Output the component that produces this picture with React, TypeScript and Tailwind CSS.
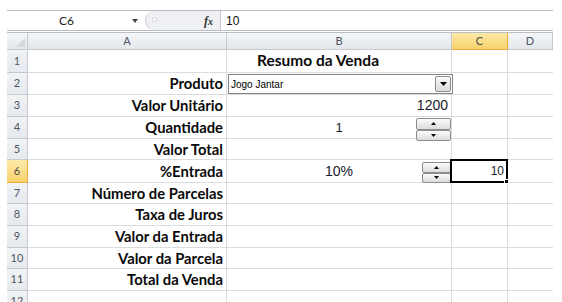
import React from "react";

const rowHeights = [23, 22, 22, 22, 21, 23, 21, 22, 22, 21, 22, 21];
const labels: Record<number, string> = {
  2: "Produto",
  3: "Valor Unitário",
  4: "Quantidade",
  5: "Valor Total",
  6: "%Entrada",
  7: "Número de Parcelas",
  8: "Taxa de Juros",
  9: "Valor da Entrada",
  10: "Valor da Parcela",
  11: "Total da Venda",
};

const calibri = { fontFamily: "Lato, 'Open Sans', sans-serif" };
const arial = { fontFamily: "'Liberation Sans', Arial, sans-serif" };

function Spinner({ className }: { className: string }) {
  return (
    <div className={`absolute flex flex-col ${className}`}>
      <div className="flex-1 flex items-center justify-center rounded-[2px] border border-[#8a8c8f] bg-gradient-to-b from-[#fbfbfb] to-[#dcdcdc]">
        <svg width="5" height="3" viewBox="0 0 5 3">
          <polygon points="2.5,0 5,3 0,3" fill="#000" />
        </svg>
      </div>
      <div className="flex-1 flex items-center justify-center rounded-[2px] border border-[#8a8c8f] bg-gradient-to-b from-[#fbfbfb] to-[#dcdcdc]">
        <svg width="5" height="3" viewBox="0 0 5 3">
          <polygon points="0,0 5,0 2.5,3" fill="#000" />
        </svg>
      </div>
    </div>
  );
}

export default function App() {
  const cols = ["A", "B", "C", "D"];
  const colW = ["w-[199px]", "w-[225px]", "w-[56px]", "w-[45px]"];
  return (
    <div className="w-[562px] h-[302px] overflow-hidden bg-white">
      <div className="pt-[10px] pl-[7px] w-[553px]">
        {/* formula bar */}
        <div className="flex h-[21px] border-t border-b border-[#b9bec5] bg-white" style={calibri}>
          <div className="w-[119px] flex items-center justify-center text-[12px] text-[#222]">C6</div>
          <div className="w-[17px] flex items-center justify-center">
            <svg width="6" height="4" viewBox="0 0 6 4">
              <polygon points="0,0 6,0 3,4" fill="#444" />
            </svg>
          </div>
          <div className="flex-1 flex items-stretch pl-[2px]">
            <div className="w-[75px] flex items-center bg-[#eef0f3] rounded-l-[10px] border-l border-[#c8ccd2] relative">
              <div className="absolute left-[6px] top-[6px] w-[5px] h-[5px] rounded-full border border-[#d0d4d9] bg-white" />
              <span
                className="ml-auto mr-[7px] text-[12px] italic font-bold text-[#333]"
                style={{ fontFamily: "'Liberation Serif', serif" }}
              >
                f<span className="text-[10px]">x</span>
              </span>
            </div>
            <div className="w-px bg-[#c8ccd2]" />
            <div className="flex-1 flex items-center pl-[5px] text-[12px] text-[#111]" style={arial}>
              10
            </div>
          </div>
        </div>
        <div className="h-[2px] border-b border-[#b9bec5]" />

        {/* header row */}
        <div className="flex h-[17px]" style={calibri}>
          <div className="w-[21px] relative bg-gradient-to-b from-[#f5f6f8] to-[#e3e7ec] border-r border-b border-[#c5cad1]">
            <svg className="absolute right-[2px] bottom-[2px]" width="9" height="9" viewBox="0 0 9 9">
              <polygon points="9,0 9,9 0,9" fill="#d4d8dd" />
            </svg>
          </div>
          {cols.map((c, i) => (
            <div
              key={c}
              className={`${colW[i]} flex items-center justify-center text-[11px] border-r border-b ${
                c === "C"
                  ? "bg-gradient-to-b from-[#fdeaa8] to-[#f8d26a] border-[#f0a83c] text-[#4b4b4b]"
                  : "bg-gradient-to-b from-[#f5f6f8] to-[#e3e7ec] border-[#c5cad1] text-[#4c5665]"
              }`}
            >
              {c}
            </div>
          ))}
        </div>

        {/* rows */}
        {rowHeights.map((h, idx) => {
          const r = idx + 1;
          const sel = r === 6;
          return (
            <div key={r} className="flex" style={{ height: h }}>
              <div
                className={`w-[21px] flex items-center justify-center text-[11px] border-r border-b ${
                  sel
                    ? "bg-gradient-to-b from-[#fdeaa8] to-[#f8d26a] border-[#f0a83c] text-[#4b4b4b]"
                    : "bg-gradient-to-b from-[#f1f3f5] to-[#e6e9ed] border-[#c5cad1] text-[#4c5665]"
                }`}
                style={calibri}
              >
                {r}
              </div>
              {/* A */}
              <div
                className="w-[199px] border-r border-b border-[#dadcdd] flex items-center justify-end pr-[3px] text-[14.8px] font-bold text-[#0a0a0a]"
                style={calibri}
              >
                {labels[r] ?? ""}
              </div>
              {/* B */}
              <div className="w-[225px] border-r border-b border-[#dadcdd] relative flex items-center" style={arial}>
                {r === 1 && (
                  <span className="pl-[30px] text-[15.5px] font-bold text-[#0a0a0a]" style={calibri}>
                    Resumo da Venda
                  </span>
                )}
                {r === 2 && (
                  <div className="absolute left-[1px] top-[1px] w-[225px] h-[20px] border border-[#808488] bg-white flex items-center z-10">
                    <span className="pl-[2px] text-[10px] text-[#000]">Jogo Jantar</span>
                    <div className="ml-auto mr-[1px] w-[16px] h-[16px] border border-[#8a8c8f] rounded-[2px] bg-gradient-to-b from-[#fbfbfb] to-[#dadada] flex items-center justify-center">
                      <svg width="7" height="4" viewBox="0 0 7 4">
                        <polygon points="0,0 7,0 3.5,4" fill="#000" />
                      </svg>
                    </div>
                  </div>
                )}
                {r === 3 && <span className="ml-auto pr-[3px] text-[14px] text-[#1a1a2a]">1200</span>}
                {r === 4 && (
                  <>
                    <span className="w-full text-center text-[13px] text-[#1a1a2a]">1</span>
                    <Spinner className="left-[189px] top-[1px] w-[35px] h-[23px] z-10" />
                  </>
                )}
                {r === 6 && (
                  <>
                    <span className="w-full text-center text-[14px] text-[#1a1a2a]">10%</span>
                    <Spinner className="left-[195px] top-[2px] w-[29px] h-[21px] z-10" />
                  </>
                )}
              </div>
              {/* C */}
              <div className="w-[56px] border-r border-b border-[#dadcdd] relative flex items-center">
                {sel && (
                  <div className="absolute -left-[2px] -top-[1px] w-[58px] h-[24px] border-2 border-black flex items-center justify-end pr-[2px] z-20">
                    <span className="text-[12px] text-[#1a1a2a]" style={arial}>10</span>
                    <div className="absolute -right-[3px] -bottom-[3px] w-[5px] h-[5px] bg-black border border-white" />
                  </div>
                )}
              </div>
              {/* D */}
              <div className="w-[45px] border-b border-[#dadcdd]" />
            </div>
          );
        })}
      </div>
    </div>
  );
}
